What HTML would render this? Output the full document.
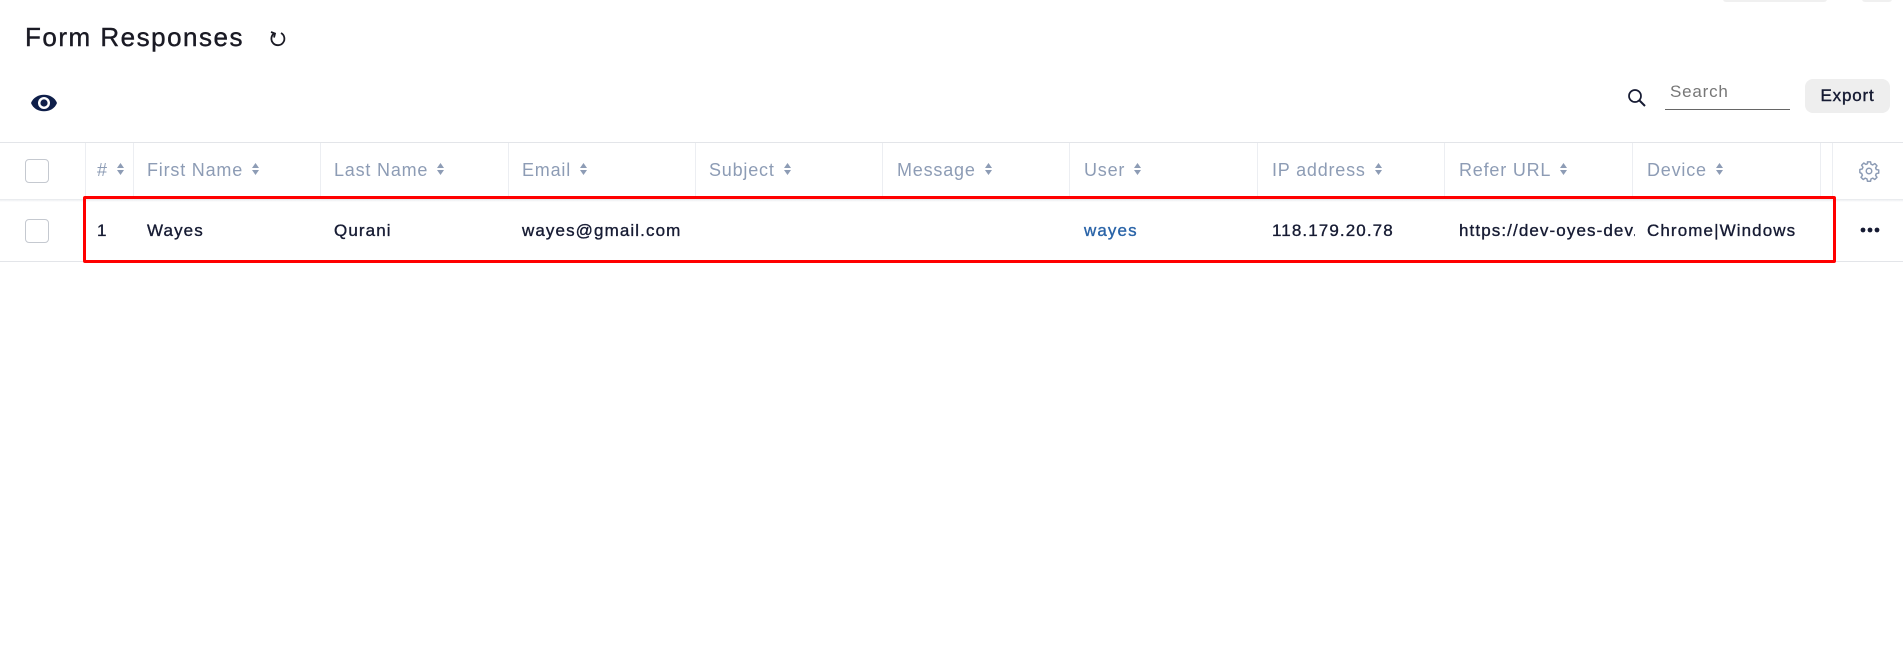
<!DOCTYPE html>
<html><head><meta charset="utf-8"><style>
*{margin:0;padding:0;box-sizing:border-box}
body{width:1903px;height:668px;background:#fff;font-family:"Liberation Sans",sans-serif;position:relative;overflow:hidden}
.a{position:absolute}
.h{color:#8d9cb5;font-size:18px;top:160px;white-space:nowrap;letter-spacing:0.8px}
.c{color:#161b33;font-size:17px;top:221px;white-space:nowrap;letter-spacing:1.1px;-webkit-text-stroke:0.35px #161b33}
.sep{position:absolute;top:143px;width:1px;height:57px;background:#eceef2}
.srt{display:inline-block;margin-left:9px;vertical-align:middle;width:7px;height:12px;position:relative;top:-2px}
.cb{position:absolute;left:25px;width:24px;height:24px;border:1.5px solid #c5c9d0;border-radius:4px;background:#fff}
</style></head><body>
<div class="a" style="left:1723px;top:-4px;width:104px;height:6px;background:#f0f0f0;border-radius:3px"></div>
<div class="a" style="left:1862px;top:-4px;width:30px;height:6px;background:#f0f0f0;border-radius:3px"></div>
<div class="a" style="left:25px;top:22px;font-size:26px;color:#1a1a24;letter-spacing:1.5px;-webkit-text-stroke:0.4px #1a1a24">Form Responses</div>
<svg class="a" style="left:268px;top:29px" width="20" height="20" viewBox="0 0 20 20"><path d="M6 4.5A6.5 6.5 0 1 0 13 4" fill="none" stroke="#1a1a24" stroke-width="1.8"/><path d="M3 3l4 1.5-1 4" fill="none" stroke="#1a1a24" stroke-width="1.8"/></svg>
<svg class="a" style="left:30px;top:90px" width="28" height="26" viewBox="0 0 28 26"><path d="M1 13C5 2 23 2 27 13C23 24 5 24 1 13Z" fill="#0f1f4a"/><circle cx="14" cy="13" r="6" fill="#fff"/><circle cx="14" cy="13" r="3.6" fill="#0f1f4a"/></svg>
<svg class="a" style="left:1627px;top:88px" width="20" height="20" viewBox="0 0 20 20"><circle cx="8" cy="8" r="6" fill="none" stroke="#161b33" stroke-width="1.7"/><path d="M12.5 12.5L18 18" stroke="#161b33" stroke-width="2"/></svg>
<div class="a" style="left:1670px;top:82px;font-size:17px;color:#777;letter-spacing:0.8px">Search</div>
<div class="a" style="left:1665px;top:109px;width:125px;height:1px;background:#666"></div>
<div class="a" style="left:1805px;top:79px;width:85px;height:34px;background:#eeeeee;border-radius:8px;font-size:17px;color:#161b33;text-align:center;line-height:34px;letter-spacing:0.8px;-webkit-text-stroke:0.4px #161b33">Export</div>
<div class="a" style="left:0;top:142px;width:1903px;height:1px;background:#e3e5e9"></div>
<div class="a" style="left:0;top:199px;width:1903px;height:3px;background:linear-gradient(#e6e8ec,#fff)"></div>
<div class="a" style="left:0;top:261px;width:1903px;height:1px;background:#e3e5e9"></div>
<div class="sep" style="left:85px"></div><div class="sep" style="left:133px"></div><div class="sep" style="left:320px"></div><div class="sep" style="left:508px"></div><div class="sep" style="left:695px"></div><div class="sep" style="left:882px"></div><div class="sep" style="left:1069px"></div><div class="sep" style="left:1257px"></div><div class="sep" style="left:1444px"></div><div class="sep" style="left:1632px"></div><div class="sep" style="left:1820px"></div><div class="sep" style="left:1832px"></div>
<div class="cb" style="top:159px"></div><div class="cb" style="top:219px"></div>
<svg width="0" height="0" style="position:absolute"><defs><symbol id="s" viewBox="0 0 7 12"><path d="M3.5 0L7 5H0Z M3.5 12L7 7H0Z" fill="#8d9cb5"/></symbol></defs></svg>
<div class="a h" style="left:97px">#<svg class="srt"><use href="#s"/></svg></div>
<div class="a h" style="left:147px">First Name<svg class="srt"><use href="#s"/></svg></div>
<div class="a h" style="left:334px">Last Name<svg class="srt"><use href="#s"/></svg></div>
<div class="a h" style="left:522px">Email<svg class="srt"><use href="#s"/></svg></div>
<div class="a h" style="left:709px">Subject<svg class="srt"><use href="#s"/></svg></div>
<div class="a h" style="left:897px">Message<svg class="srt"><use href="#s"/></svg></div>
<div class="a h" style="left:1084px">User<svg class="srt"><use href="#s"/></svg></div>
<div class="a h" style="left:1272px">IP address<svg class="srt"><use href="#s"/></svg></div>
<div class="a h" style="left:1459px">Refer URL<svg class="srt"><use href="#s"/></svg></div>
<div class="a h" style="left:1647px">Device<svg class="srt"><use href="#s"/></svg></div>
<svg class="a" style="left:1858px;top:160px" width="22" height="22" viewBox="0 0 24 24"><circle cx="12" cy="12" r="3" fill="none" stroke="#8d9cb5" stroke-width="1.6"/><path d="M10.3 2h3.4l.5 2.6 1.9.8 2.2-1.5 2.4 2.4-1.5 2.2.8 1.9 2.6.5v3.4l-2.6.5-.8 1.9 1.5 2.2-2.4 2.4-2.2-1.5-1.9.8-.5 2.6h-3.4l-.5-2.6-1.9-.8-2.2 1.5-2.4-2.4 1.5-2.2-.8-1.9L2 13.7v-3.4l2.6-.5.8-1.9-1.5-2.2 2.4-2.4 2.2 1.5 1.9-.8z" fill="none" stroke="#8d9cb5" stroke-width="1.6" stroke-linejoin="round"/></svg>
<div class="a c" style="left:97px">1</div>
<div class="a c" style="left:147px">Wayes</div>
<div class="a c" style="left:334px">Qurani</div>
<div class="a c" style="left:522px">wayes@gmail.com</div>
<div class="a c" style="left:1084px;color:#2a64a8;-webkit-text-stroke:0.35px #2a64a8">wayes</div>
<div class="a c" style="left:1272px">118.179.20.78</div>
<div class="a c" style="left:1459px;width:176px;overflow:hidden">https://dev-oyes-dev.com</div>
<div class="a c" style="left:1647px">Chrome|Windows</div>
<svg class="a" style="left:1860px;top:227px" width="20" height="6"><circle cx="3" cy="3" r="2.4" fill="#161b33"/><circle cx="10" cy="3" r="2.4" fill="#161b33"/><circle cx="17" cy="3" r="2.4" fill="#161b33"/></svg>
<div class="a" style="left:83px;top:196px;width:1753px;height:67px;border:3.5px solid #f00;border-radius:2px"></div>
</body></html>
